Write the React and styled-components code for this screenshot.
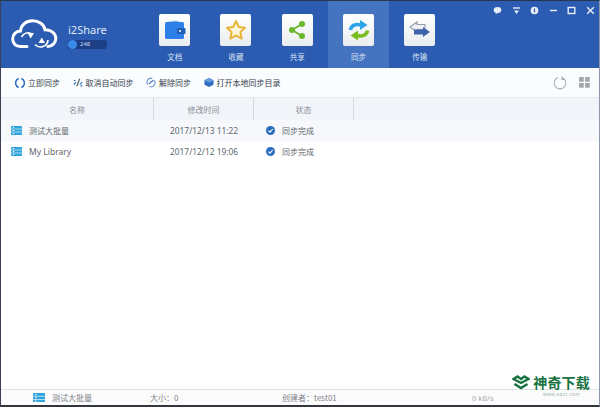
import React from 'react';
import styled, { createGlobalStyle } from 'styled-components';

const GlobalStyle = createGlobalStyle`
  html, body {
    margin: 0;
    padding: 0;
    background: #fff;
  }
`;

const Window = styled.div`
  width: 600px;
  height: 407px;
  box-sizing: border-box;
  display: flex;
  flex-direction: column;
  overflow: hidden;
  position: relative;
  border-top: 1px solid #27364f;
  border-left: 1px solid #3a4150;
  border-right: 1px solid #8d98a8;
  border-bottom: 2px solid #33373d;
  background: #fff;
  font-family: "Noto Sans CJK SC", "Noto Sans", sans-serif;
  color: #444;
`;

const Header = styled.div`
  height: 67px;
  flex: none;
  display: flex;
  background: #2b5cb1;
  position: relative;
`;

const Brand = styled.div`
  width: 143px;
  flex: none;
  display: flex;
  align-items: center;
  padding: 0 0 2px 10px;
  box-sizing: border-box;
  gap: 10px;
`;

const BrandText = styled.div`
  display: flex;
  flex-direction: column;
  gap: 3px;
  color: #dfe8f6;
  padding-top: 4px;
`;

const BrandName = styled.div`
  font-family: "Noto Sans", sans-serif;
  font-size: 11px;
  line-height: 14px;
`;

const Quota = styled.div`
  width: 39px;
  height: 9px;
  border-radius: 3px;
  background: #1c3f85;
  display: flex;
  align-items: center;
  font-family: "Noto Sans", sans-serif;
  font-size: 6px;
  color: #cfdcf2;
  gap: 3px;
`;

const QuotaDot = styled.span`
  width: 9px;
  height: 9px;
  border-radius: 50%;
  background: #3a8be8;
`;

const Nav = styled.div`
  display: flex;
`;

const NavItem = styled.div`
  width: 61.3px;
  display: flex;
  flex-direction: column;
  align-items: center;
  padding-top: 13px;
  box-sizing: border-box;
  background: ${p => (p.$active ? '#4473c0' : 'transparent')};
  color: #dbe5f5;
  font-size: 7.5px;
  line-height: 10px;
  gap: 6px;
`;

const Tile = styled.div`
  width: 31px;
  height: 32px;
  border-radius: 2px;
  background: linear-gradient(#ffffff, #e9ecef);
  display: flex;
  align-items: center;
  justify-content: center;
`;

const WindowControls = styled.div`
  position: absolute;
  top: 5px;
  right: 4px;
  display: flex;
  gap: 9.6px;
  align-items: center;
`;

const Toolbar = styled.div`
  height: 29px;
  flex: none;
  display: flex;
  align-items: center;
  background: #fbfcfe;
  padding: 0 9px 0 14px;
  gap: 12.5px;
`;

const ToolButton = styled.div`
  display: flex;
  align-items: center;
  gap: 3px;
  font-size: 8px;
  color: #333c4a;
  white-space: nowrap;

  svg {
    width: 10px;
    flex: none;
  }
`;

const ToolRight = styled.div`
  margin-left: auto;
  display: flex;
  align-items: center;
  gap: 12px;
`;

const TableHead = styled.div`
  height: 23px;
  flex: none;
  display: flex;
  background: #f1f4f8;
  border-top: 1px solid #e4e8ee;
  box-sizing: border-box;
  color: #8a8f97;
  font-size: 8px;
`;

const HeadCell = styled.div`
  width: ${p => p.$w}px;
  flex: none;
  display: flex;
  align-items: center;
  justify-content: center;
  box-sizing: border-box;
  border-right: 1px solid #d5dae1;
`;

const Row = styled.div`
  height: 21px;
  flex: none;
  display: flex;
  align-items: center;
  background: ${p => (p.$shaded ? '#f6f8fb' : '#fff')};
  color: #62676e;
  font-size: 8px;
`;

const NameCell = styled.div`
  width: 153px;
  flex: none;
  display: flex;
  align-items: center;
  gap: 7px;
  padding-left: 10px;
  box-sizing: border-box;
  font-size: 8px;
`;

const LatinName = styled.span`
  font-family: "Noto Sans", sans-serif;
  font-size: 8.5px;
`;

const TimeCell = styled.div`
  width: 100px;
  flex: none;
  padding-left: 16px;
  box-sizing: border-box;
  font-family: "Noto Sans", sans-serif;
  font-size: 8.4px;
  white-space: nowrap;
`;

const StatusCell = styled.div`
  display: flex;
  align-items: center;
  gap: 7px;
  padding-left: 12px;
  font-size: 8px;
`;

const Spacer = styled.div`
  flex: 1;
`;

const StatusBar = styled.div`
  height: 15px;
  flex: none;
  display: flex;
  align-items: center;
  border-top: 1px solid #dfe2e6;
  background: #fbfbfc;
  font-size: 8px;
  color: #7d8289;
`;

const StatusItem = styled.div`
  width: ${p => p.$w}px;
  padding-left: ${p => p.$pad || 0}px;
  flex: none;
  box-sizing: border-box;
  display: flex;
  align-items: center;
  gap: 7px;
  white-space: nowrap;
`;

const Speed = styled.div`
  font-family: "Noto Sans", sans-serif;
  font-size: 7.5px;
  color: #a9adb3;
`;

const Watermark = styled.div`
  position: absolute;
  right: 9px;
  bottom: 8px;
  display: flex;
  align-items: flex-start;
  gap: 3px;
`;

const WatermarkText = styled.div`
  display: flex;
  flex-direction: column;
  align-items: center;
  gap: 2px;
`;

const WatermarkTitle = styled.div`
  font-size: 14px;
  line-height: 15px;
  font-weight: 700;
  color: #17723f;
  letter-spacing: 0.2px;
  white-space: nowrap;
`;

const WatermarkUrl = styled.div`
  font-family: "Noto Sans", sans-serif;
  font-size: 4.5px;
  line-height: 5px;
  color: #9ab3a5;
  letter-spacing: 0.5px;
`;

const CloudLogo = () => (
  <svg width="47" height="30" viewBox="0 0 47 30" fill="none">
    <path
      d="M16 27.5 H9 C4.5 27.5 1.7 24 1.7 20 C1.7 15.5 5 12.2 9.5 12 C10 6 15 1.7 21.5 1.7 C28 1.7 33 5.5 34 10.7 C40 10.5 44.8 14.5 44.8 19.5 C44.8 24 41 27.5 37 27.5"
      stroke="#fff"
      strokeWidth="3"
      strokeLinecap="round"
    />
    <path d="M10.5 18 A8 8 0 0 1 19.5 14" stroke="#fff" strokeWidth="1.7" />
    <path d="M16.5 14 H23 L19.7 19.5 Z" fill="#fff" />
    <path d="M37 21 A7.5 7.5 0 0 1 24 25.5" stroke="#fff" strokeWidth="1.7" />
    <path d="M27.5 24 H34 L30.7 18.5 Z" fill="#fff" />
  </svg>
);

const WalletIcon = () => (
  <svg width="22" height="20" viewBox="0 0 22 20">
    <rect x="1" y="2" width="19" height="17" rx="1.5" fill="#2f7fe8" />
    <path d="M3 2 L12 0.5 L16 2 Z" fill="#7eb0ee" />
    <rect x="13" y="8" width="8.5" height="6" rx="1" fill="#1f5fb8" />
    <circle cx="16" cy="11" r="1" fill="#fff" />
  </svg>
);

const StarIcon = () => (
  <svg width="22" height="22" viewBox="0 0 22 22">
    <path
      d="M11 2 L13.8 8 L20 8.8 L15.4 13.2 L16.7 19.6 L11 16.4 L5.3 19.6 L6.6 13.2 L2 8.8 L8.2 8 Z"
      fill="#fdf6dc"
      stroke="#e9b73e"
      strokeWidth="2"
      strokeLinejoin="round"
    />
  </svg>
);

const ShareIcon = () => (
  <svg width="20" height="20" viewBox="0 0 20 20">
    <path d="M15 4 L5 10 L15 16" stroke="#69b82a" strokeWidth="1.8" fill="none" />
    <circle cx="15" cy="4" r="3" fill="#69b82a" />
    <circle cx="5" cy="10" r="3" fill="#69b82a" />
    <circle cx="15" cy="16" r="3" fill="#69b82a" />
  </svg>
);

const SyncIcon = () => (
  <svg width="22" height="22" viewBox="0 0 22 22" fill="none">
    <path d="M2.5 11 C3 7 7 4.5 13 6" stroke="#2aa5e8" strokeWidth="3.6" />
    <path d="M12 1 L19.5 6 L12 11 Z" fill="#2aa5e8" />
    <path d="M19.5 11.5 C19 15.5 15 18 9 16.5" stroke="#79bf22" strokeWidth="3.6" />
    <path d="M10 11.5 L2.5 16.5 L10 21.5 Z" fill="#79bf22" />
  </svg>
);

const TransferIcon = () => (
  <svg width="24" height="20" viewBox="0 0 24 20">
    <path d="M9 2 L2 7 L9 12 V9.5 H17 V4.5 H9 Z" fill="#eef0f5" stroke="#98a0b0" strokeWidth="1.2" />
    <path d="M15 7 L22 12 L15 17 V14.5 H6 V9.5 H15 Z" fill="#3f62ad" />
  </svg>
);

const ControlIcon = ({ kind }) => (
  <svg width="9" height="9" viewBox="0 0 9 9" fill="none" stroke="#e8eef8" strokeWidth="1.4">
    {kind === 'chat' && (
      <>
        <ellipse cx="4.5" cy="4" rx="3.8" ry="3" fill="#e8eef8" stroke="none" />
        <path d="M3 6 L2.5 8.5 L5 6.5 Z" fill="#e8eef8" stroke="none" />
      </>
    )}
    {kind === 'menu' && (
      <>
        <path d="M1 2 H8" />
        <path d="M2 4.5 H7 L4.5 8 Z" fill="#e8eef8" stroke="none" />
      </>
    )}
    {kind === 'info' && (
      <>
        <circle cx="4.5" cy="4.5" r="3.8" fill="#e8eef8" stroke="none" />
        <path d="M4.5 2.5 V6.5" stroke="#2b5cb1" strokeWidth="1.2" />
      </>
    )}
    {kind === 'min' && <path d="M1 4.5 H8" />}
    {kind === 'max' && <rect x="1.2" y="1.5" width="6.6" height="6" />}
    {kind === 'close' && <path d="M1.2 1.2 L7.8 7.8 M7.8 1.2 L1.2 7.8" />}
  </svg>
);

const SyncNowIcon = () => (
  <svg height="12" viewBox="0 0 11 12" fill="none" stroke="#2d6cc0" strokeWidth="1.6">
    <path d="M4 1 C-0.5 2.5 -0.5 9.5 4 11" />
    <path d="M7 1 C11.5 2.5 11.5 9.5 7 11" />
  </svg>
);

const CancelAutoIcon = () => (
  <svg height="11" viewBox="0 0 12 11" fill="none" strokeWidth="1.3">
    <path d="M1 8 L3.5 5" stroke="#2d6cc0" />
    <path d="M8 1 L4.5 10" stroke="#44505f" />
    <path d="M8 8 L11 5" stroke="#2d6cc0" />
    <path d="M1 3 H3 M9 9.5 H11" stroke="#2d6cc0" />
  </svg>
);

const UnlinkIcon = () => (
  <svg height="13" viewBox="0 0 11 13" fill="none" stroke="#6f9bd6" strokeWidth="1.2">
    <path d="M2 9 A4.5 4.5 0 0 1 7 2" />
    <path d="M9 4 A4.5 4.5 0 0 1 4 11" />
    <path d="M3 8 L8 4" stroke="#3a6fbe" />
  </svg>
);

const BoxIcon = () => (
  <svg height="11" viewBox="0 0 11 11">
    <path d="M5.5 0.5 L10.5 3 V8 L5.5 10.5 L0.5 8 V3 Z" fill="#2f6fbd" />
    <path d="M5.5 0.5 L10.5 3 L5.5 5.5 L0.5 3 Z" fill="#6aa0dc" />
  </svg>
);

const ClockIcon = () => (
  <svg width="14" height="14" viewBox="0 0 14 14" fill="none" stroke="#a8acb2" strokeWidth="1.1">
    <path d="M9 1.6 A5.8 5.8 0 1 1 5 1.6" />
    <path d="M9 0.5 V3.5 H12" />
  </svg>
);

const GridIcon = () => (
  <svg width="11" height="11" viewBox="0 0 11 11" fill="#a3a7ad">
    <rect x="0" y="0" width="4.8" height="4.8" rx="0.6" />
    <rect x="6" y="0" width="4.8" height="4.8" rx="0.6" />
    <rect x="0" y="6" width="4.8" height="4.8" rx="0.6" />
    <rect x="6" y="6" width="4.8" height="4.8" rx="0.6" />
  </svg>
);

const LibraryIcon = ({ size = 11 }) => (
  <svg width={size} height={size * 0.82} viewBox="0 0 11 9">
    <rect x="0" y="0" width="11" height="9" rx="0.8" fill="#2fa3dc" />
    <path d="M0 3 H11 M0 6 H11" stroke="#fff" strokeWidth="0.6" />
    <path d="M1.8 1.5 H3.2 M1.8 4.5 H3.2 M1.8 7.5 H3.2" stroke="#fff" strokeWidth="0.9" />
  </svg>
);

const DoneIcon = () => (
  <svg width="9" height="9" viewBox="0 0 9 9" fill="none">
    <circle cx="4.5" cy="4.5" r="4.5" fill="#2b6cc0" />
    <path d="M2.4 4.6 L4 6.1 L6.7 3" stroke="#fff" strokeWidth="1.1" />
  </svg>
);

const WatermarkLogo = () => (
  <svg width="18" height="15" viewBox="0 0 18 15" fill="none" stroke="#17723f" strokeWidth="2.4">
    <path d="M1.5 4 L5.5 1.5 L9 4 L12.5 1.5 L16.5 4 L9 8 Z" />
    <path d="M2.5 9 L9 13 L15.5 9" />
  </svg>
);

const navItems = [
  { label: '文档', icon: <WalletIcon /> },
  { label: '收藏', icon: <StarIcon /> },
  { label: '共享', icon: <ShareIcon /> },
  { label: '同步', icon: <SyncIcon />, active: true },
  { label: '传输', icon: <TransferIcon /> },
];

const tools = [
  { label: '立即同步', icon: <SyncNowIcon /> },
  { label: '取消自动同步', icon: <CancelAutoIcon /> },
  { label: '解除同步', icon: <UnlinkIcon /> },
  { label: '打开本地同步目录', icon: <BoxIcon /> },
];

const rows = [
  { name: '测试大批量', time: '2017/12/13 11:22' },
  { name: 'My Library', time: '2017/12/12 19:06', latin: true },
];

export default function App() {
  return (
    <>
      <GlobalStyle />
      <Window>
        <Header>
          <Brand>
            <CloudLogo />
            <BrandText>
              <BrandName>i2Share</BrandName>
              <Quota>
                <QuotaDot />
                248
              </Quota>
            </BrandText>
          </Brand>
          <Nav>
            {navItems.map(item => (
              <NavItem key={item.label} $active={item.active}>
                <Tile>{item.icon}</Tile>
                {item.label}
              </NavItem>
            ))}
          </Nav>
          <WindowControls>
            {['chat', 'menu', 'info', 'min', 'max', 'close'].map(kind => (
              <ControlIcon key={kind} kind={kind} />
            ))}
          </WindowControls>
        </Header>
        <Toolbar>
          {tools.map(tool => (
            <ToolButton key={tool.label}>
              {tool.icon}
              {tool.label}
            </ToolButton>
          ))}
          <ToolRight>
            <ClockIcon />
            <GridIcon />
          </ToolRight>
        </Toolbar>
        <TableHead>
          <HeadCell $w={153}>名称</HeadCell>
          <HeadCell $w={100}>修改时间</HeadCell>
          <HeadCell $w={100}>状态</HeadCell>
        </TableHead>
        {rows.map((row, i) => (
          <Row key={row.name} $shaded={i === 0}>
            <NameCell>
              <LibraryIcon />
              {row.latin ? <LatinName>{row.name}</LatinName> : row.name}
            </NameCell>
            <TimeCell>{row.time}</TimeCell>
            <StatusCell>
              <DoneIcon />
              同步完成
            </StatusCell>
          </Row>
        ))}
        <Spacer />
        <StatusBar>
          <StatusItem $w={149} $pad={32}>
            <LibraryIcon size={12} />
            测试大批量
          </StatusItem>
          <StatusItem $w={132}>大小：0</StatusItem>
          <StatusItem $w={190}>创建者：test01</StatusItem>
          <Speed>0 kB/s</Speed>
        </StatusBar>
        <Watermark>
          <WatermarkLogo />
          <WatermarkText>
            <WatermarkTitle>神奇下载</WatermarkTitle>
            <WatermarkUrl>www.sqxz.com</WatermarkUrl>
          </WatermarkText>
        </Watermark>
      </Window>
    </>
  );
}
